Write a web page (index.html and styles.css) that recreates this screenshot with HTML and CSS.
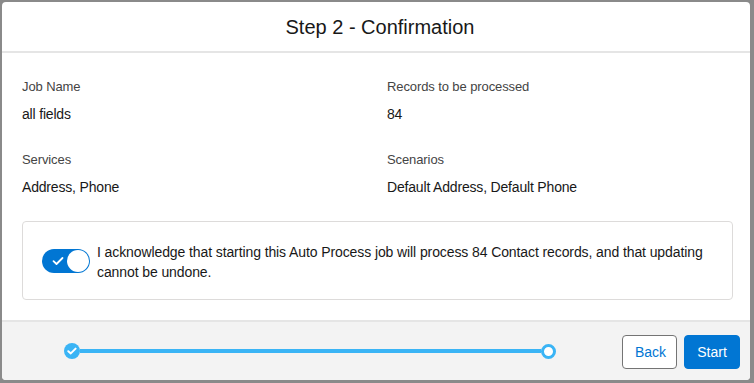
FILE: index.html
```html
<!DOCTYPE html>
<html lang="en">
<head>
<meta charset="utf-8">
<title>Step 2 - Confirmation</title>
<link rel="stylesheet" href="styles.css">
</head>
<body>
<div class="modal">
  <header class="modal-header">
    <h2 class="title">Step 2 - Confirmation</h2>
  </header>
  <main class="modal-body">
    <div class="fields">
      <div class="field">
        <div class="label">Job Name</div>
        <div class="value">all fields</div>
      </div>
      <div class="field">
        <div class="label">Records to be processed</div>
        <div class="value">84</div>
      </div>
      <div class="field">
        <div class="label">Services</div>
        <div class="value">Address, Phone</div>
      </div>
      <div class="field">
        <div class="label">Scenarios</div>
        <div class="value">Default Address, Default Phone</div>
      </div>
    </div>
    <div class="ack">
      <span class="toggle">
        <svg class="toggle-check" width="12" height="10" viewBox="0 0 12 10"><path d="M1.5 5.2 L4.5 8 L10.5 2" fill="none" stroke="#fff" stroke-width="1.8" stroke-linecap="round" stroke-linejoin="round"/></svg>
        <span class="knob"></span>
      </span>
      <p class="ack-text">I acknowledge that starting this Auto Process job will process 84 Contact records, and that updating cannot be undone.</p>
    </div>
  </main>
  <footer class="modal-footer">
    <div class="progress">
      <span class="step done">
        <svg width="10" height="8" viewBox="0 0 10 8"><path d="M1.3 4.2 L3.8 6.4 L8.6 1.6" fill="none" stroke="#fff" stroke-width="2" stroke-linecap="round" stroke-linejoin="round"/></svg>
      </span>
      <span class="bar"></span>
      <span class="step current"></span>
    </div>
    <div class="actions">
      <button class="btn btn-neutral">Back</button>
      <button class="btn btn-brand">Start</button>
    </div>
  </footer>
</div>
</body>
</html>
```
FILE: styles.css
```css
* { box-sizing: border-box; }
html, body { margin: 0; height: 100%; }
body {
  background: #8a8a8a;
  padding: 2px 4px 3px 2px;
  font-family: "Liberation Sans", Arial, sans-serif;
  color: #181818;
}
.modal {
  width: 748px;
  height: 378px;
  background: #fff;
  border-radius: 4px;
  display: flex;
  flex-direction: column;
  overflow: hidden;
}
.modal-header {
  height: 51px;
  border-bottom: 2px solid #e5e5e5;
  display: flex;
  align-items: center;
  justify-content: center;
}
.title {
  margin: 0;
  font-size: 20px;
  font-weight: 400;
  color: #181818;
  padding-top: 1px;
  padding-left: 8px;
}
.modal-body {
  flex: 1;
  padding: 25px 17px 0 20px;
}
.fields {
  display: grid;
  grid-template-columns: 1fr 1fr;
  column-gap: 19px;
  row-gap: 27px;
}
.label {
  font-size: 13px;
  line-height: 18px;
  color: #444;
  margin-bottom: 8px;
  letter-spacing: -0.1px;
}
.value {
  font-size: 14px;
  line-height: 20px;
  color: #181818;
  letter-spacing: -0.18px;
}
.ack {
  margin-top: 24px;
  height: 79px;
  border: 1px solid #dddbda;
  border-radius: 4px;
  display: flex;
  align-items: center;
  padding: 2px 10px 0 19px;
}
.toggle {
  flex: none;
  width: 48px;
  height: 24px;
  border-radius: 12px;
  background: #0176d3;
  display: flex;
  align-items: center;
  justify-content: space-between;
  padding: 0 1px 0 10px;
  margin-top: -1px;
}
.toggle-check { display: block; }
.knob {
  width: 22px;
  height: 22px;
  border-radius: 50%;
  background: #fff;
}
.ack-text {
  margin: 0 0 0 7px;
  font-size: 14px;
  line-height: 20px;
  color: #181818;
  letter-spacing: -0.1px;
}
.modal-footer {
  height: 60px;
  border-top: 2px solid #e5e5e5;
  background: #f3f3f3;
  display: flex;
  align-items: center;
  padding: 0 10px 0 62px;
}
.progress {
  width: 492px;
  display: flex;
  align-items: center;
}
.step {
  flex: none;
  width: 16px;
  height: 16px;
  border-radius: 50%;
  display: flex;
  align-items: center;
  justify-content: center;
}
.step.done { background: #3ab4f5; }
.step.current {
  width: 15px;
  height: 15px;
  background: #fff;
  border: 3px solid #3ab4f5;
}
.bar {
  flex: 1;
  height: 4px;
  background: #3ab4f5;
}
.actions {
  margin-left: auto;
  display: flex;
  gap: 7px;
  margin-top: 1px;
}
.btn {
  height: 34px;
  border-radius: 4px;
  font-family: inherit;
  font-size: 14px;
  padding: 0 12px;
  cursor: pointer;
}
.btn-neutral {
  width: 55px;
  background: #fff;
  border: 1px solid #747474;
  color: #0176d3;
}
.btn-brand {
  width: 56px;
  background: #0176d3;
  border: 1px solid #0176d3;
  color: #fff;
}
```
